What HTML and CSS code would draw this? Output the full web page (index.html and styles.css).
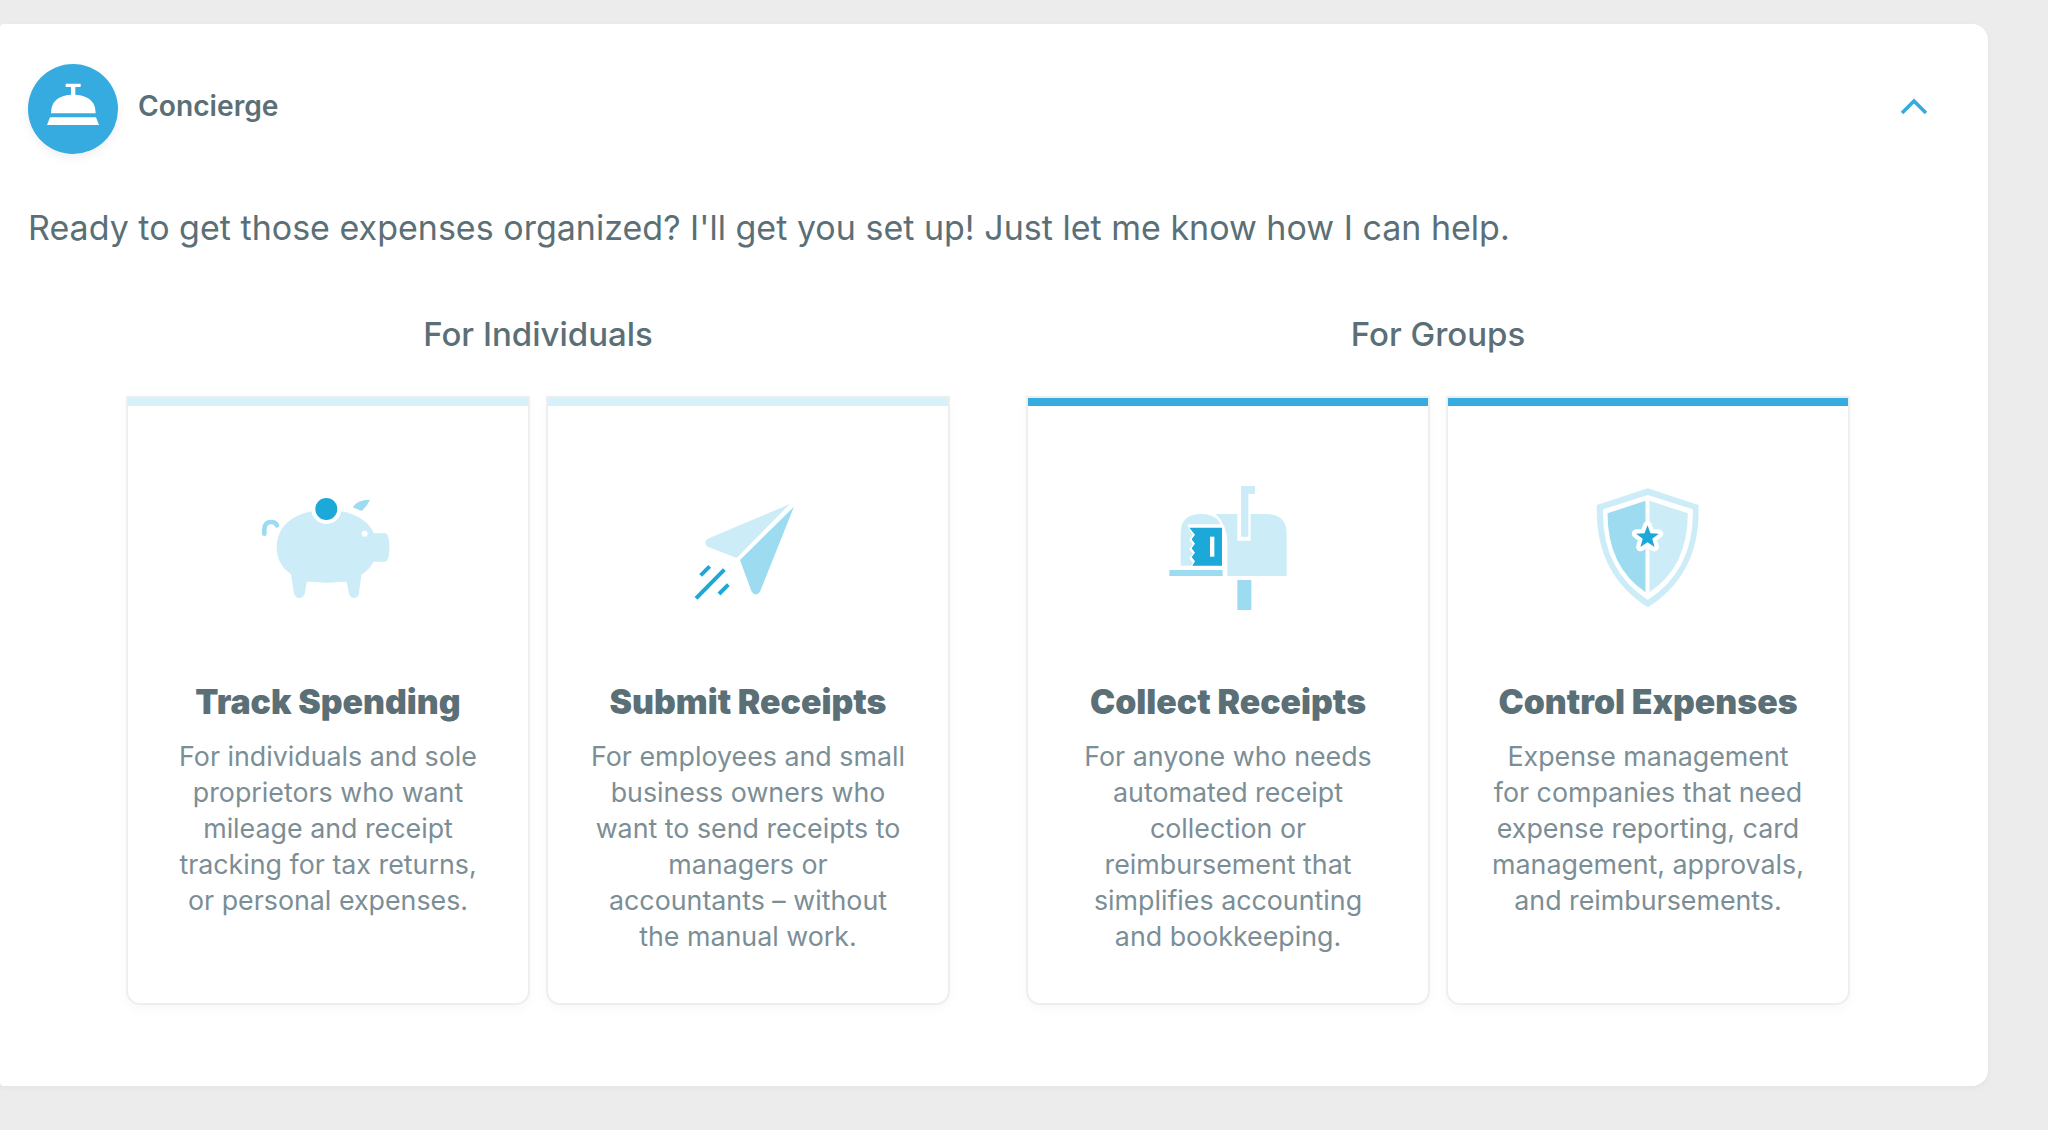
FILE: index.html
```html
<!DOCTYPE html>
<html lang="en">
<head>
<meta charset="utf-8">
<title>Concierge</title>
<link rel="stylesheet" href="styles.css">
</head>
<body>
<main class="panel">
  <header class="head">
    <div class="who">
      <svg class="avatar" viewBox="84 192 270 270"><circle cx="219" cy="327" r="135" fill="#35abe0"/><path fill="#fff" d="M197 251h45v10h-16v23q61 4 61 56H153q0-52 60-56v-23h-16zM150 352h138l9 23H141z"/></svg>
      <span class="name">Concierge</span>
    </div>
    <svg class="chev" viewBox="0 0 28 17"><path d="M2 15 14 3l12 12" fill="none" stroke="#35abe0" stroke-width="3.6"/></svg>
  </header>
  <p class="intro">Ready to get those expenses organized? I'll get you set up! Just let me know how I can help.</p>
  <div class="groups">
    <section class="group">
      <h2 class="group-title">For Individuals</h2>
      <div class="cards">
        <article class="card">
          <svg class="icon" viewBox="9 0 570 450">
            <path fill="#ccedf8" d="M140 232c0-70 60-112 150-112s150 42 150 112-60 106-150 106-150-36-150-106z"/>
            <path fill="#ccedf8" d="M425 190h40q13 0 13 42t-13 43h-40zM181 300l11 70q3 14 16 14t17-14l5-35h120l7 35q3 14 15 14t15-14l7-55z"/>
            <circle cx="289" cy="117" r="45" fill="#fff"/>
            <circle cx="289" cy="117" r="33" fill="#1ca8d8"/>
            <circle cx="404" cy="191" r="9" fill="#fff"/>
            <path fill="none" stroke="#9ddcf0" stroke-width="14" stroke-linecap="round" d="M103 191v-14q2-21 20-21 14 0 18 10"/>
            <path fill="#9ddcf0" d="M368 112q12-22 52-23-8 18-25 34z"/>
          </svg>
          <h3 class="card-title">Track Spending</h3>
          <p class="card-text">For individuals and sole<br>proprietors who want<br>mileage and receipt<br>tracking for tax returns,<br>or personal expenses.</p>
        </article>
        <article class="card">
          <svg class="icon" viewBox="-21 -30 570 450">
            <path fill="#ccedf8" d="M390 72 230 234l-87-34q-15-12 0-24z"/>
            <path fill="#9ddcf0" d="M402 80 240 240l35 95q12 17 25 0z"/>
            <path fill="none" stroke="#1ca8d8" stroke-width="12" d="M108 355l85-86M122 286l27-27M177 342l28-28"/>
          </svg>
          <h3 class="card-title">Submit Receipts</h3>
          <p class="card-text">For employees and small<br>business owners who<br>want to send receipts to<br>managers or<br>accountants – without<br>the manual work.</p>
        </article>
      </div>
    </section>
    <section class="group">
      <h2 class="group-title">For Groups</h2>
      <div class="cards">
        <article class="card card-live">
          <svg class="icon" viewBox="-51 0 570 450">
            <path fill="#ccedf8" d="M197 132h65v80h40v-80h45q63 0 63 58v128H232V220q0-55-35-88zM273 48h42v24h-20v128h-22z"/>
            <path fill="#ccedf8" d="M92 287v-97q0-58 60-58 64 0 64 58v97z"/>
            <path fill="#fff" d="M113 163h105v130H120l8-14-10-14 10-14-10-14 10-14-10-14 10-14-10-14z"/>
            <path fill="#1ca8d8" d="M118 173h98v114H127l8-13-10-13 10-13-10-13 10-14-10-13 10-14z"/>
            <path fill="#fff" d="M180 200h13v60h-13z"/>
            <path fill="#9ddcf0" d="M58 300h160v18H58zM262 330h42v90h-42z"/>
          </svg>
          <h3 class="card-title">Collect Receipts</h3>
          <p class="card-text">For anyone who needs<br>automated receipt<br>collection or<br>reimbursement that<br>simplifies accounting<br>and bookkeeping.</p>
        </article>
        <article class="card card-live">
          <svg class="icon" viewBox="-79.500 -30 570 450">
            <path fill="#ccedf8" d="M205 25 357 75q8 205-152 307Q45 280 52 75z"/>
            <path fill="#fff" d="M205 45 340 88q5 180-135 272Q65 268 71 88z"/>
            <path fill="#9ddcf0" d="M198 62 84 100q0 160 114 237z"/>
            <path fill="#ccedf8" d="M210 62l115 38q0 160-115 237z"/>
            <path fill="#fff" stroke="#fff" stroke-width="26" stroke-linejoin="round" d="M204 136l8.800 23.900 25.400 1-19.900 15.700 6.900 24.500L204 187l-21.200 14.100 6.900-24.500-19.900-15.700 25.400-1z"/>
            <path fill="#1ca8d8" d="M204 136l8.800 23.900 25.400 1-19.900 15.700 6.900 24.500L204 187l-21.200 14.100 6.900-24.500-19.900-15.700 25.400-1z"/>
          </svg>
          <h3 class="card-title">Control Expenses</h3>
          <p class="card-text">Expense management<br>for companies that need<br>expense reporting, card<br>management, approvals,<br>and reimbursements.</p>
        </article>
      </div>
    </section>
  </div>
</main>
</body>
</html>
```

FILE: styles.css
```css
* { box-sizing: border-box; }
html, body { margin: 0; height: 100%; }
body {
  background: #ececec;
  padding-top: 24px;
  font-family: Inter, "Liberation Sans", sans-serif;
  color: #5b6f77;
  overflow: hidden;
}
.panel {
  width: 1988px;
  height: 1062px;
  background: #fff;
  border-radius: 4px 16px 16px 4px;
  box-shadow: 0 2px 6px rgba(0, 0, 0, .04);
  padding: 40px 60px 0 28px;
}
.head { display: flex; justify-content: space-between; align-items: center; height: 90px; }
.who { display: flex; align-items: center; gap: 20px; }
.avatar { width: 90px; height: 90px; filter: drop-shadow(0 4px 4px rgba(0, 0, 0, .06)); }
.name { font-size: 28.200px; font-weight: 600; margin-top: -7px; }
.chev { width: 28px; height: 17px; margin-top: -6px; }
.intro { margin: 52px 0 0; font-size: 34px; line-height: 44px; letter-spacing: .01px; }
.groups { display: flex; gap: 76px; margin: 46px 0 0 98px; }
.group { width: 824px; }
.group-title { margin: 0; height: 100px; padding-top: 18px; text-align: center; font-size: 33px; line-height: 40px; font-weight: 500; }
.cards { display: grid; grid-template-columns: 1fr 1fr; gap: 16px; }
.card {
  height: 609px;
  border: 2px solid #eee;
  border-radius: 0 0 14px 14px;
  box-shadow: 0 4px 12px rgba(0, 0, 0, .03);
  text-align: center;
  background: linear-gradient(#d6f1fa, #d6f1fa) top / 100% 8px no-repeat;
  padding-top: 72px;
}
.card-live { background-image: linear-gradient(#35abe0, #35abe0); }
.icon { display: block; width: 190px; height: 150px; margin: 0 auto; }
.card-title { margin: 60px 0 0; font-size: 33.800px; line-height: 44px; font-weight: 900; }
.card-text { margin: 14px 0 0; font-size: 26.800px; line-height: 36px; color: #7c8e95; }
```
